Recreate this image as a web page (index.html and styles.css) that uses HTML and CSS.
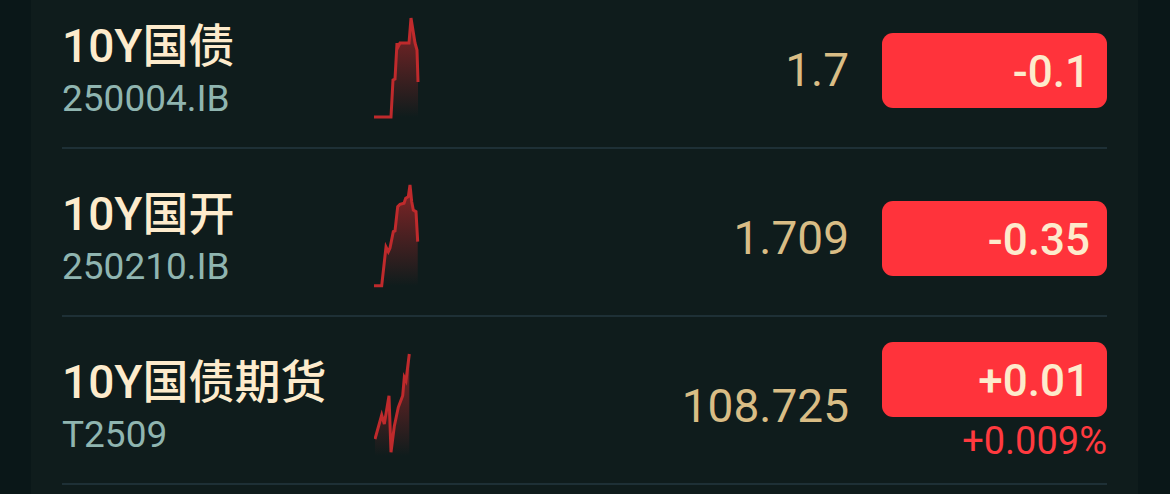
FILE: index.html
```html
<!DOCTYPE html>
<html lang="zh">
<head>
<meta charset="utf-8">
<link rel="stylesheet" href="styles.css">
</head>
<body>
<div class="page">
  <div class="card">
    <ul class="list">
      <li class="row">
        <div class="name">
          <div class="title">10Y国债</div>
          <div class="code">250004.IB</div>
        </div>
        <svg class="spark" width="46" height="104" viewBox="0 0 46 104">
          <defs>
            <linearGradient id="g1" x1="0" y1="0" x2="0" y2="1">
              <stop offset="0" stop-color="#b8282b" stop-opacity="0.7"/>
              <stop offset="1" stop-color="#b8282b" stop-opacity="0"/>
            </linearGradient>
          </defs>
          <path d="M19 64 L21 63 L23 27 L24 31 L26 27 L35 27 L37 2 L41 27 L43 34 L44 66 L44 101 L19 101 Z" fill="url(#g1)"/>
          <polyline points="0,101 17,101 19,64 21,63 23,27 24,31 26,27 35,27 37,2 41,27 43,34 44,66" fill="none" stroke="#bf2a2c" stroke-width="3"/>
        </svg>
        <div class="price">1.7</div>
        <div class="change">
          <div class="badge">-0.1</div>
        </div>
      </li>
      <li class="row">
        <div class="name">
          <div class="title">10Y国开</div>
          <div class="code">250210.IB</div>
        </div>
        <svg class="spark" width="46" height="104" viewBox="0 0 46 104">
          <defs>
            <linearGradient id="g2" x1="0" y1="0" x2="0" y2="1">
              <stop offset="0" stop-color="#b8282b" stop-opacity="0.7"/>
              <stop offset="1" stop-color="#b8282b" stop-opacity="0"/>
            </linearGradient>
          </defs>
          <path d="M7.7 101.7 L12 63 L14.3 67.7 L16 64 L19.3 47.7 L21 47 L23.7 22.7 L26 20.3 L30 19.3 L31.7 14.3 L34.3 12.7 L36 1 L37.7 17.7 L39.3 26 L42 27.7 L43.7 57.7 L43.7 102 Z" fill="url(#g2)"/>
          <polyline points="0,101.7 7.7,101.7 12,63 14.3,67.7 16,64 19.3,47.7 21,47 23.7,22.7 26,20.3 30,19.3 31.7,14.3 34.3,12.7 36,1 37.7,17.7 39.3,26 42,27.7 43.7,57.7" fill="none" stroke="#bf2a2c" stroke-width="3"/>
        </svg>
        <div class="price">1.709</div>
        <div class="change">
          <div class="badge">-0.35</div>
        </div>
      </li>
      <li class="row">
        <div class="name">
          <div class="title">10Y国债期货</div>
          <div class="code">T2509</div>
        </div>
        <svg class="spark" width="46" height="104" viewBox="0 0 46 104">
          <defs>
            <linearGradient id="g3" x1="0" y1="0" x2="0" y2="1">
              <stop offset="0" stop-color="#b8282b" stop-opacity="0.7"/>
              <stop offset="1" stop-color="#b8282b" stop-opacity="0"/>
            </linearGradient>
          </defs>
          <path d="M1 87 L7.7 63 L10.3 72 L15 43.7 L17 100.3 L20.3 74.3 L24.3 55.3 L28.7 43.7 L30.3 25.3 L32 28.7 L35.3 2 L35.3 104 L1 104 Z" fill="url(#g3)"/>
          <polyline points="1,87 7.7,63 10.3,72 15,43.7 17,100.3 20.3,74.3 24.3,55.3 28.7,43.7 30.3,25.3 32,28.7 35.3,2" fill="none" stroke="#bf2a2c" stroke-width="3"/>
        </svg>
        <div class="price">108.725</div>
        <div class="change">
          <div class="badge">+0.01</div>
          <div class="pct">+0.009%</div>
        </div>
      </li>
    </ul>
  </div>
</div>
</body>
</html>
```
FILE: styles.css
```css
* {
  box-sizing: border-box;
}

html, body {
  margin: 0;
  padding: 0;
  background: #0a1718;
  height: 494px;
  overflow: hidden;
}

body {
  font-family: Roboto, "Noto Sans CJK SC", sans-serif;
}

.page {
  padding-left: 31px;
  padding-right: 32px;
}

.card {
  background: #0f1c1c;
  padding: 0 31px;
  min-height: 520px;
}

.list {
  list-style: none;
  margin: -19px 0 0 0;
  padding: 0;
}

.row {
  display: flex;
  align-items: center;
  height: 168px;
  padding-top: 12px;
  border-bottom: 2px solid #1e3036;
}

.name {
  width: 312px;
  flex: none;
}

.title {
  font-size: 46px;
  line-height: 54px;
  font-weight: 500;
  color: #fdebcc;
  white-space: nowrap;
}

.code {
  margin-top: 4px;
  font-size: 37px;
  line-height: 44px;
  color: #8fb5b0;
}

.spark {
  flex: none;
  display: block;
  align-self: flex-start;
  margin-top: 23px;
}

.price {
  flex: 1;
  text-align: right;
  font-size: 46px;
  line-height: 54px;
  color: #d9bd85;
  padding-right: 33px;
}

.change {
  width: 225px;
  flex: none;
  display: flex;
  flex-direction: column;
  align-items: stretch;
}

.badge {
  height: 75px;
  padding-top: 3px;
  line-height: 72px;
  border-radius: 11px;
  background: #ff333b;
  color: #fdebcc;
  font-size: 44px;
  font-weight: 500;
  text-align: right;
  padding-right: 17px;
}

.pct {
  height: 53px;
  line-height: 49px;
  font-size: 38px;
  color: #ff3a3f;
  text-align: right;
}
```
